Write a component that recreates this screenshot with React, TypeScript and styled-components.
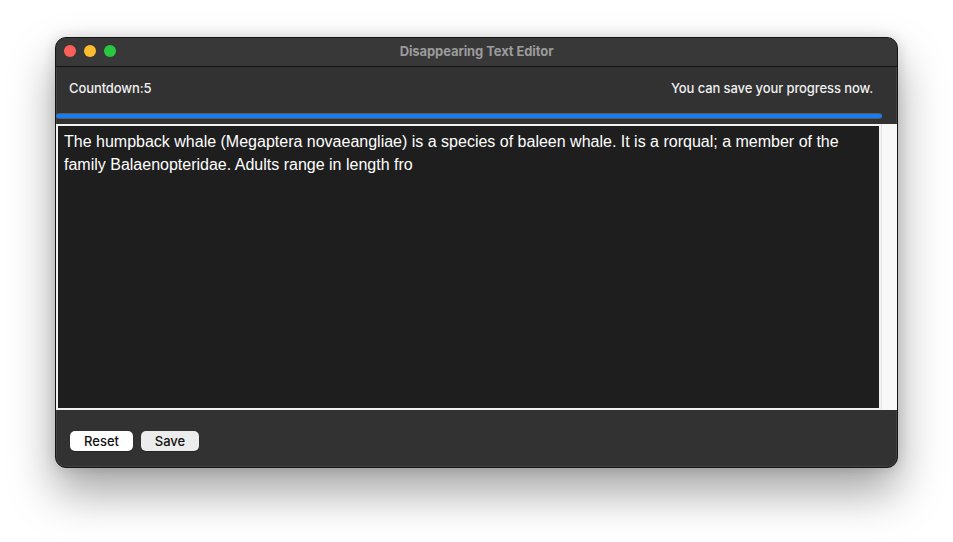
import React from "react";
import styled, { createGlobalStyle } from "styled-components";

const Global = createGlobalStyle`
  html, body { margin: 0; padding: 0; background: #ffffff; }
  body { font-family: Inter, "Noto Sans", "Liberation Sans", sans-serif; }
`;

const Desktop = styled.div`
  width: 953px;
  height: 542px;
  padding: 37px 0 0 55px;
  box-sizing: border-box;
  background: #ffffff;
`;

const Window = styled.div`
  width: 841px;
  border: 1px solid #151515;
  border-radius: 11px;
  overflow: hidden;
  background: #323232;
  box-shadow: 0 24px 46px rgba(0, 0, 0, 0.36), 0 0 14px rgba(0, 0, 0, 0.14),
    inset 0 0 0 1px rgba(255, 255, 255, 0.08);
  display: flex;
  flex-direction: column;
`;

const TitleBar = styled.div`
  position: relative;
  height: 29px;
  box-sizing: border-box;
  padding-bottom: 2px;
  background: #383838;
  border-bottom: 1px solid #141414;
  display: flex;
  align-items: center;
  justify-content: center;
`;

const Lights = styled.div`
  position: absolute;
  left: 8px;
  top: 7px;
  display: flex;
  gap: 8px;
`;

const Light = styled.span<{ $c: string }>`
  width: 12px;
  height: 12px;
  border-radius: 50%;
  background: ${(p) => p.$c};
`;

const Title = styled.div`
  font-size: 13px;
  font-weight: 700;
  color: #9b9b9b;
  letter-spacing: -0.1px;
`;

const Header = styled.div`
  height: 46px;
  box-sizing: border-box;
  padding: 0 24px 4px 13px;
  display: flex;
  align-items: center;
  justify-content: space-between;
  font-size: 13px;
  font-weight: 500;
  color: #f0f0f0;
  letter-spacing: -0.1px;
`;

const Track = styled.div`
  height: 6px;
  margin-right: 15px;
  border-radius: 3px;
  background: #5b5b5b;
  display: flex;
  align-items: center;
`;

const Fill = styled.div`
  height: 4px;
  border-radius: 2px;
  background: #1a7cf2;
`;

const EditorRow = styled.div`
  margin-top: 5px;
  height: 286px;
  display: flex;
`;

const Editor = styled.textarea`
  flex: 1;
  margin: 0;
  box-sizing: border-box;
  height: 100%;
  border: 2px solid #f2f2f2;
  background: #1e1e1e;
  color: #ffffff;
  font-family: "Liberation Sans", Arial, sans-serif;
  font-size: 16px;
  line-height: 23px;
  padding: 4px 6px 3px;
  resize: none;
  outline: none;
  overflow: hidden;
`;

const ScrollStrip = styled.div`
  width: 16px;
  background: #f8f8f8;
  border-left: 1px solid #e6e6e6;
  box-sizing: border-box;
`;

const Footer = styled.div`
  height: 57px;
  display: flex;
  align-items: flex-start;
  gap: 8px;
  padding: 21px 0 0 14px;
  box-sizing: border-box;
`;

const Button = styled.button<{ $bg: string; $w: number }>`
  width: ${(p) => p.$w}px;
  height: 20px;
  border: none;
  border-radius: 5px;
  background: ${(p) => p.$bg};
  color: #111;
  font-family: Inter, "Noto Sans", sans-serif;
  font-size: 13px;
  font-weight: 500;
  padding: 0;
  box-shadow: 0 0.5px 1px rgba(0, 0, 0, 0.3);
`;

const text =
  "The humpback whale (Megaptera novaeangliae) is a species of baleen whale. It is a rorqual; a member of the family Balaenopteridae. Adults range in length fro";

export default function App() {
  const progress = 100;
  return (
    <>
      <Global />
      <Desktop>
        <Window>
          <TitleBar>
            <Lights>
              <Light $c="#ff5f57" />
              <Light $c="#febc2e" />
              <Light $c="#28c840" />
            </Lights>
            <Title>Disappearing Text Editor</Title>
          </TitleBar>
          <Header>
            <span>Countdown:5</span>
            <span>You can save your progress now.</span>
          </Header>
          <Track>
            <Fill style={{ width: `${progress}%` }} />
          </Track>
          <EditorRow>
            <Editor defaultValue={text} spellCheck={false} />
            <ScrollStrip />
          </EditorRow>
          <Footer>
            <Button $bg="#ffffff" $w={63}>Reset</Button>
            <Button $bg="#ececec" $w={58}>Save</Button>
          </Footer>
        </Window>
      </Desktop>
    </>
  );
}
